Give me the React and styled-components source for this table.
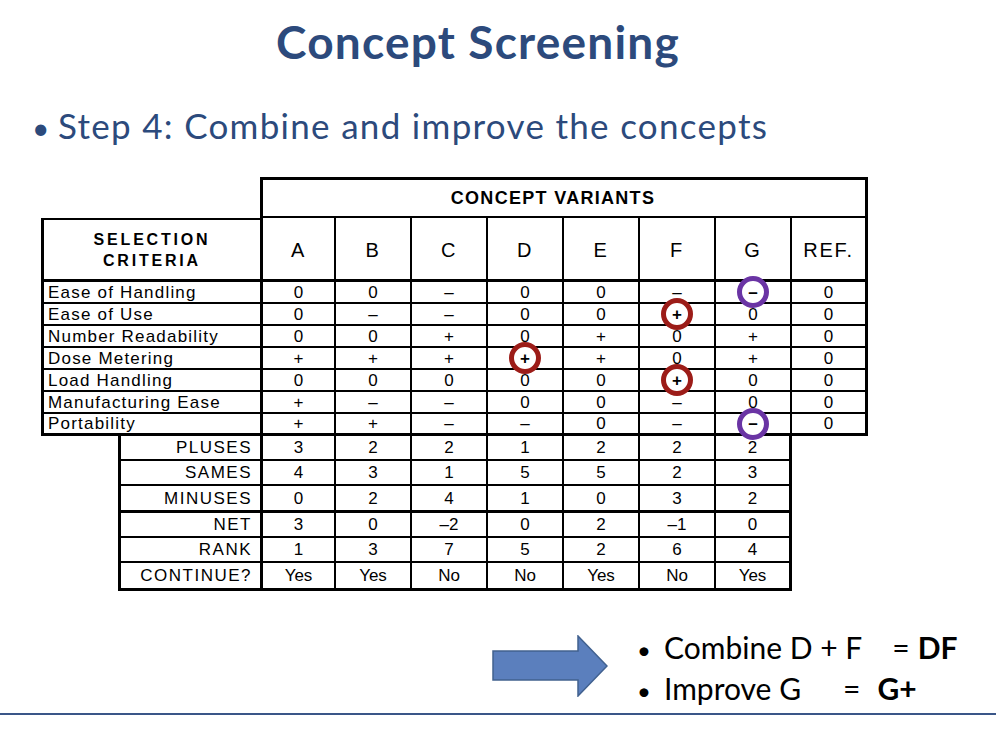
import React from "react";
import styled, { createGlobalStyle } from "styled-components";

const GlobalStyle = createGlobalStyle`
  html, body {
    margin: 0;
    padding: 0;
    background: #fff;
  }
  body {
    font-family: "Lato", "Liberation Sans", sans-serif;
  }
`;

const THIN = 2;
const THICK = 3;

const VARIANTS = ["A", "B", "C", "D", "E", "F", "G", "REF."];

const CRITERIA = [
  { name: "Ease of Handling", values: ["0", "0", "–", "0", "0", "–", "–", "0"] },
  { name: "Ease of Use", values: ["0", "–", "–", "0", "0", "+", "0", "0"] },
  { name: "Number Readability", values: ["0", "0", "+", "0", "+", "0", "+", "0"] },
  { name: "Dose Metering", values: ["+", "+", "+", "+", "+", "0", "+", "0"] },
  { name: "Load Handling", values: ["0", "0", "0", "0", "0", "+", "0", "0"] },
  { name: "Manufacturing Ease", values: ["+", "–", "–", "0", "0", "–", "0", "0"] },
  { name: "Portability", values: ["+", "+", "–", "–", "0", "–", "–", "0"] },
];

// circled cells: "row-col" -> ring colour
const MARKS = {
  "0-6": "#6a34a4",
  "1-5": "#9c1c18",
  "3-3": "#9c1c18",
  "4-5": "#9c1c18",
  "6-6": "#6a34a4",
};

const SUMMARY = [
  { name: "PLUSES", values: ["3", "2", "2", "1", "2", "2", "2"] },
  { name: "SAMES", values: ["4", "3", "1", "5", "5", "2", "3"] },
  { name: "MINUSES", values: ["0", "2", "4", "1", "0", "3", "2"], heavy: true },
  { name: "NET", values: ["3", "0", "–2", "0", "2", "–1", "0"] },
  { name: "RANK", values: ["1", "3", "7", "5", "2", "6", "4"] },
  { name: "CONTINUE?", values: ["Yes", "Yes", "No", "No", "Yes", "No", "Yes"], heavy: true },
];

const Slide = styled.div`
  width: 996px;
  height: 734px;
  display: flex;
  flex-direction: column;
  overflow: hidden;
  background: #fff;
`;

const Title = styled.h1`
  margin: 13px 40px 0 0;
  font: 700 46px/58px "Lato", sans-serif;
  letter-spacing: 1.2px;
  color: #2c4a7c;
  text-align: center;
`;

const Lead = styled.div`
  display: flex;
  align-items: baseline;
  margin-top: 31px;
  padding-left: 32px;
  font: 400 35px/46px "Lato", sans-serif;
  letter-spacing: 1.3px;
  color: #2c4a7c;
`;

const LeadDot = styled.span`
  width: 26px;
  font-size: 30px;
`;

const Matrix = styled.div`
  display: grid;
  grid-template-columns: 77px 142px repeat(8, 76px);
  grid-template-rows: 41px 64px repeat(7, 22px) 25px 25px 27px 25px 25px 28px;
  margin: 27px 0 0 41px;
  font-family: "Liberation Sans", Arial, sans-serif;
  color: #000;
`;

const Cell = styled.div`
  position: relative;
  box-sizing: border-box;
  display: flex;
  align-items: center;
  justify-content: center;
  border: 0 solid #000;
  font-size: 17px;
  line-height: 1;
`;

const Spacer = styled.div`
  grid-column: span ${(p) => p.$span || 1};
`;

const VariantsHead = styled(Cell)`
  grid-column: span 8;
  border-width: ${THICK}px ${THICK}px ${THIN}px ${THICK}px;
  padding-right: 22px;
  font-size: 18px;
  font-weight: 700;
  letter-spacing: 1.3px;
`;

const CriteriaHead = styled(Cell)`
  grid-column: span 2;
  flex-direction: column;
  border-width: ${THIN}px 0 ${THICK}px ${THICK}px;
  font-size: 16px;
  font-weight: 700;
  line-height: 21px;
  letter-spacing: 2.8px;
  text-align: center;
`;

const ColHead = styled(Cell)`
  border-width: 0 ${(p) => (p.$last ? THICK : THIN)}px ${THICK}px
    ${(p) => (p.$first ? THICK : 0)}px;
  font-size: 20px;
  letter-spacing: 1.8px;
  padding-top: 2px;
`;

const Criterion = styled(Cell)`
  grid-column: span 2;
  justify-content: flex-start;
  padding-left: 4px;
  border-width: 0 0 ${(p) => (p.$heavy ? THICK : THIN)}px ${THICK}px;
  letter-spacing: 1.2px;
`;

const Score = styled(Cell)`
  border-width: 0 ${(p) => (p.$last ? THICK : THIN)}px
    ${(p) => (p.$heavy ? THICK : THIN)}px ${(p) => (p.$first ? THICK : 0)}px;
`;

const SumLabel = styled(Cell)`
  justify-content: flex-end;
  padding-right: 8px;
  border-width: 0 0 ${(p) => (p.$heavy ? THICK : THIN)}px ${THICK}px;
  letter-spacing: 1.5px;
`;

const Ring = styled.span`
  position: absolute;
  left: 50%;
  top: 50%;
  z-index: 2;
  width: 32px;
  height: 32px;
  box-sizing: border-box;
  transform: translate(-50%, -50%);
  display: flex;
  align-items: center;
  justify-content: center;
  border: 5.5px solid ${(p) => p.$color};
  border-radius: 50%;
  background: #fff;
  font-size: 17px;
  font-weight: 700;
`;

const Outcome = styled.div`
  display: flex;
  align-items: flex-start;
  margin-top: 37px;
  padding-left: 492px;
`;

const Arrow = styled.svg`
  flex: none;
  margin-top: 7px;
`;

const Points = styled.ul`
  list-style: none;
  margin: 0 0 0 29px;
  padding: 0;
  font: 400 30px/39px "Lato", sans-serif;
  color: #000;
`;

const Point = styled.li`
  display: flex;
  align-items: baseline;
  white-space: pre;
`;

const PointDot = styled.span`
  width: 27px;
  font-size: 24px;
`;

const Equals = styled.span`
  margin-left: ${(p) => p.$gap}px;
`;

const Result = styled.b`
  margin-left: ${(p) => p.$gap}px;
  font-weight: 700;
`;

const Rule = styled.div`
  height: 2px;
  margin-top: 3px;
  background: #3a5688;
`;

export default function App() {
  return (
    <Slide>
      <GlobalStyle />
      <Title>Concept Screening</Title>
      <Lead>
        <LeadDot>•</LeadDot>
        Step 4: Combine and improve the concepts
      </Lead>

      <Matrix>
        <Spacer $span={2} />
        <VariantsHead>CONCEPT VARIANTS</VariantsHead>

        <CriteriaHead>
          <span>SELECTION</span>
          <span>CRITERIA</span>
        </CriteriaHead>
        {VARIANTS.map((v, i) => (
          <ColHead key={v} $first={i === 0} $last={i === VARIANTS.length - 1}>
            {v}
          </ColHead>
        ))}

        {CRITERIA.map((row, r) => {
          const heavy = r === CRITERIA.length - 1;
          return (
            <React.Fragment key={row.name}>
              <Criterion $heavy={heavy}>{row.name}</Criterion>
              {row.values.map((val, c) => {
                const mark = MARKS[`${r}-${c}`];
                return (
                  <Score
                    key={c}
                    $first={c === 0}
                    $last={c === row.values.length - 1}
                    $heavy={heavy}
                  >
                    {mark ? <Ring $color={mark}>{val}</Ring> : val}
                  </Score>
                );
              })}
            </React.Fragment>
          );
        })}

        {SUMMARY.map((row) => (
          <React.Fragment key={row.name}>
            <Spacer />
            <SumLabel $heavy={row.heavy}>{row.name}</SumLabel>
            {row.values.map((val, c) => (
              <Score
                key={c}
                $first={c === 0}
                $last={c === row.values.length - 1}
                $heavy={row.heavy}
              >
                {val}
              </Score>
            ))}
            <Spacer />
          </React.Fragment>
        ))}
      </Matrix>

      <Outcome>
        <Arrow width="116" height="62" viewBox="0 0 116 62">
          <polygon
            points="1,16 86,16 86,1 115,31 86,61 86,45 1,45"
            fill="#5b7fbd"
            stroke="#41618f"
            strokeWidth="1.5"
          />
        </Arrow>
        <Points>
          <Point>
            <PointDot>•</PointDot>
            Combine D + F
            <Equals $gap={30}>=</Equals>
            <Result $gap={8}>DF</Result>
          </Point>
          <Point>
            <PointDot>•</PointDot>
            Improve G
            <Equals $gap={42}>=</Equals>
            <Result $gap={17}>G+</Result>
          </Point>
        </Points>
      </Outcome>
      <Rule />
    </Slide>
  );
}
